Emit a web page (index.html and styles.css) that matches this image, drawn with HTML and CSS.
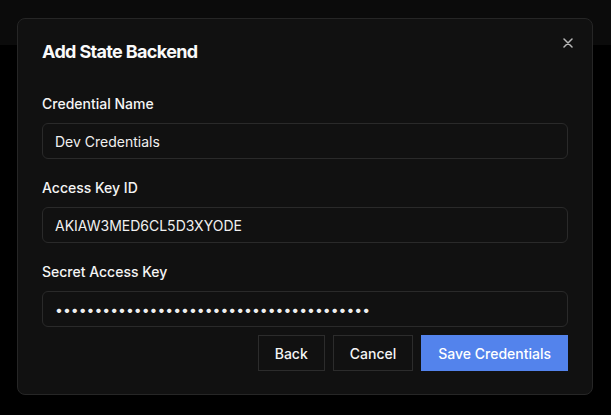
FILE: index.html
```html
<!DOCTYPE html>
<html lang="en">
<head>
<meta charset="utf-8">
<title>Add State Backend</title>
<link rel="stylesheet" href="styles.css">
</head>
<body>
<header class="topbar"></header>
<div class="overlay">
  <div class="modal" role="dialog" aria-labelledby="modal-title">
    <button class="close" type="button" aria-label="Close">
      <svg width="10" height="10" viewBox="0 0 10 10" aria-hidden="true"><path d="M1 1 L9 9 M9 1 L1 9" stroke="currentColor" stroke-width="1.5" stroke-linecap="round" fill="none"/></svg>
    </button>
    <h2 class="title" id="modal-title">Add State Backend</h2>
    <form class="form">
      <div class="field">
        <label class="label" for="cred-name">Credential Name</label>
        <input class="input" id="cred-name" type="text" value="Dev Credentials">
      </div>
      <div class="field">
        <label class="label" for="key-id">Access Key ID</label>
        <input class="input" id="key-id" type="text" value="AKIAW3MED6CL5D3XYODE">
      </div>
      <div class="field last">
        <label class="label" for="secret">Secret Access Key</label>
        <input class="input" id="secret" type="password" value="wJalrXUtnFEMIK7MDENGbPxRfiCYEXAMPLEKEY12">
      </div>
      <div class="actions">
        <button class="btn" type="button">Back</button>
        <button class="btn" type="button">Cancel</button>
        <button class="btn primary" type="button">Save Credentials</button>
      </div>
    </form>
  </div>
</div>
</body>
</html>
```
FILE: styles.css
```css
* { box-sizing: border-box; }
html, body {
  margin: 0;
  height: 100%;
  background: #000;
  font-family: Inter, "Noto Sans", "Liberation Sans", sans-serif;
  color: #f5f5f5;
}
.topbar {
  height: 45px;
  background: #0b0b0b;
}
.overlay {
  position: fixed;
  inset: 0;
  display: flex;
  align-items: flex-start;
  justify-content: flex-start;
  padding: 18px 0 0 17px;
}
.modal {
  position: relative;
  width: 576px;
  height: 377px;
  background: #111111;
  border: 1px solid #262626;
  border-radius: 8px;
  padding: 24px;
}
.close {
  position: absolute;
  top: 19px;
  right: 19px;
  width: 10px;
  height: 10px;
  padding: 0;
  border: 0;
  background: none;
  color: #b8b8b8;
  display: flex;
  cursor: pointer;
}
.title {
  margin: 0;
  font-size: 18px;
  line-height: 18px;
  font-weight: 700;
  color: #fafafa;
  letter-spacing: -0.65px;
}
.form {
  margin: 33px 0 0;
  display: flex;
  flex-direction: column;
}
.field {
  display: flex;
  flex-direction: column;
  gap: 9px;
  margin-bottom: 19px;
}
.field.last { margin-bottom: 8px; }
.label {
  font-size: 14px;
  line-height: 20px;
  font-weight: 500;
  color: #f5f5f5;
}
.input {
  height: 36px;
  width: 100%;
  background: #111111;
  border: 1px solid #2a2a2a;
  border-radius: 6px;
  padding: 1px 12px 0;
  font-family: inherit;
  font-size: 14px;
  color: #f0f0f0;
  outline: none;
}
.actions {
  display: flex;
  justify-content: flex-end;
  gap: 8px;
}
.btn {
  height: 36px;
  padding: 0 16px;
  background: #111111;
  border: 1px solid #2c2c2c;
  border-radius: 0;
  font-family: inherit;
  font-size: 14px;
  font-weight: 500;
  color: #f5f5f5;
  cursor: pointer;
}
.btn.primary {
  background: #5383ec;
  border-color: #5383ec;
  color: #ffffff;
}
```
